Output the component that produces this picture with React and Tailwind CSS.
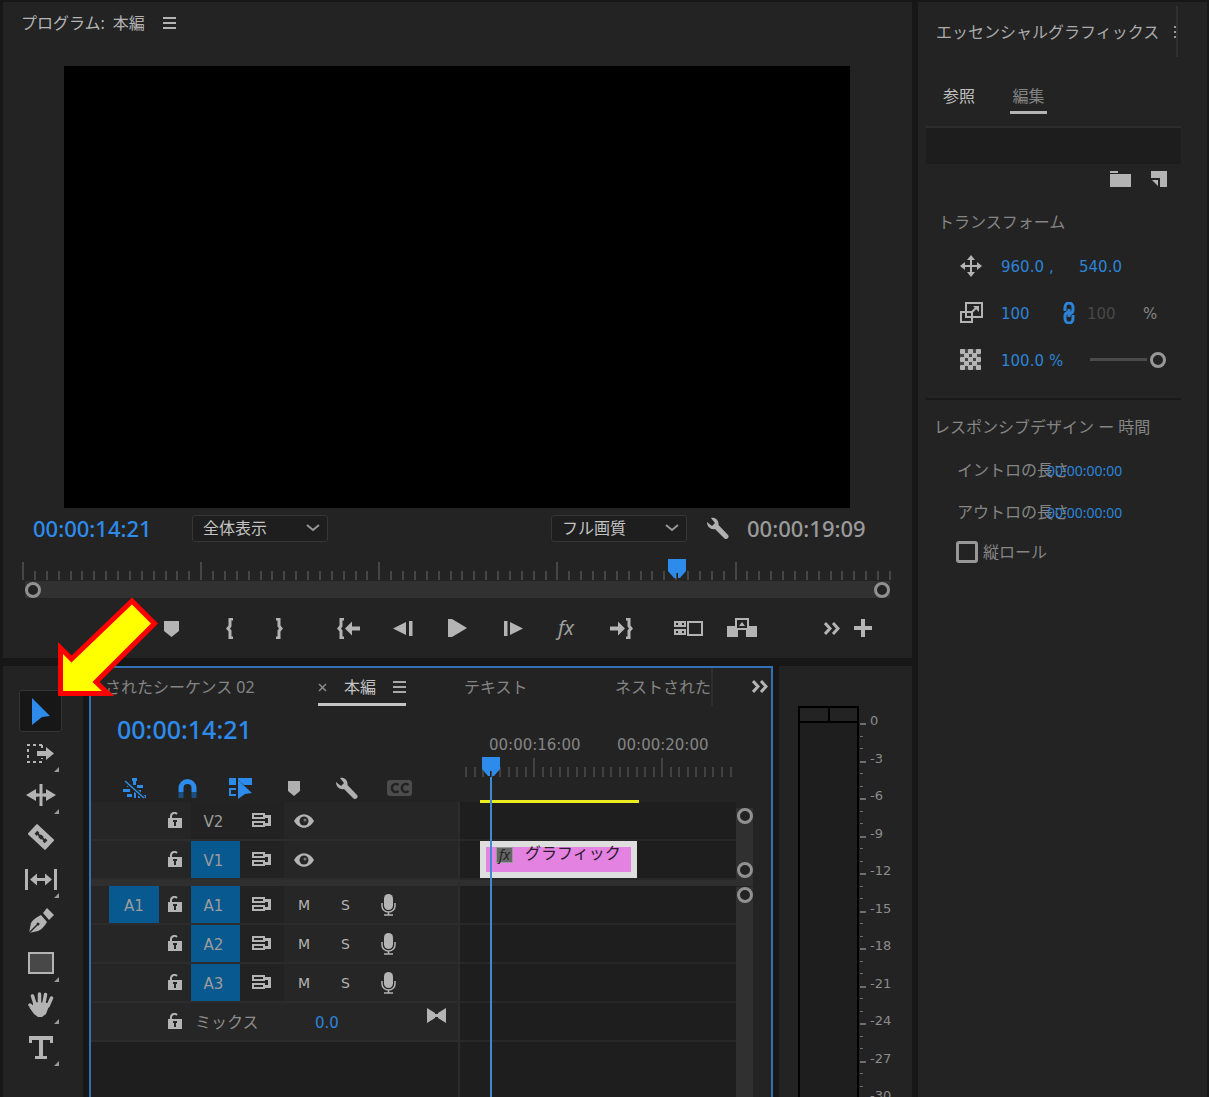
import { useState } from 'react';

const TOOLS = [
  { id: 'select', label: '選択ツール', more: false },
  { id: 'track', label: 'トラックの前方選択ツール', more: true },
  { id: 'ripple', label: 'リップルツール', more: true },
  { id: 'razor', label: 'レーザーツール', more: false },
  { id: 'slip', label: 'スリップツール', more: true },
  { id: 'pen', label: 'ペンツール', more: false },
  { id: 'rect', label: '長方形ツール', more: true },
  { id: 'hand', label: '手のひらツール', more: true },
  { id: 'type', label: '横書き文字ツール', more: true },
];

const TRANSPORT = [
  { id: 'marker', label: 'マーカーを追加', box: 'w-14' },
  { id: 'in', label: 'インをマーク', box: 'w-[60px]' },
  { id: 'out', label: 'アウトをマーク', box: 'w-10' },
  { id: 'goIn', label: 'インポイントへ移動', box: 'ml-[23px] w-[54px]' },
  { id: 'back', label: '1フレーム前へ', box: 'w-[54px]' },
  { id: 'play', label: '再生', box: 'w-[54px]' },
  { id: 'step', label: '1フレーム次へ', box: 'w-[58px]' },
  { id: 'fx', label: 'エフェクト', box: 'w-12' },
  { id: 'goOut', label: 'アウトポイントへ移動', box: 'w-[62px]' },
  { id: 'compare', label: '比較表示', box: 'ml-[9px] w-[54px]' },
  { id: 'export', label: '挿入', box: 'w-[54px]' },
  { id: 'chevrons', label: 'その他', box: 'ml-auto w-8' },
  { id: 'plus', label: 'ボタンエディター', box: 'w-[30px]' },
];

const SETTINGS = [
  { id: 'nest', label: 'ネスト', color: 'text-[#2d8ceb]' },
  { id: 'magnet', label: 'スナップ', color: 'text-[#2d8ceb]' },
  { id: 'linked', label: 'リンクされた選択', color: 'text-[#2d8ceb]' },
  { id: 'smallMarker', label: 'マーカー', color: 'text-[#b0b0b0]' },
  { id: 'wrench', label: 'タイムライン表示設定', color: 'text-[#b0b0b0]' },
  { id: 'cc', label: 'キャプション', color: 'text-[#4c4c4c]' },
];

const DARK = '#232323';
const WRENCH = 'M1 5 L6 9 L9 6 L5 1 C9 0 13 3 12.500 8 L22 18 A2.500 2.500 0 0 1 18.500 21.500 L9 12 C5 13 1 10 1 5 Z';

// [width, height, drawing]
const ICONS = {
  menu: [13, 12, <path d="M0 1h13M0 6h13M0 11h13" stroke="currentColor" strokeWidth="2" />],
  chevron: [14, 8, <path d="M1 1l6 5 6-5" fill="none" stroke="currentColor" strokeWidth="2" />],
  wrench: [23, 23, <path d={WRENCH} fill="currentColor" />],
  marker: [15, 17, <path d="M0 1h15v10l-7.500 6L0 11z" fill="currentColor" />],
  smallMarker: [12, 15, <path d="M0 0h12v10l-6 5-6-5z" fill="currentColor" />],
  in: [7, 21, <path d="M7 0H2.500v7.500L0 10.500l2.500 3V21H7v-2.500H5.500v-6l-1.500-2 1.500-2v-6H7z" fill="currentColor" />],
  out: [7, 21, <path d="M0 0h4.500v7.500L7 10.500l-2.500 3V21H0v-2.500h1.500v-6l1.500-2-1.500-2v-6H0z" fill="currentColor" />],
  goIn: [24, 21, (
    <>
      <path d="M7 0H2.500v7.500L0 10.500l2.500 3V21H7v-2.500H5.500v-6l-1.500-2 1.500-2v-6H7z" fill="currentColor" />
      <path d="M8 10.500l7-7v5h8v4h-8v5z" fill="currentColor" />
    </>
  )],
  goOut: [24, 21, (
    <>
      <path d="M17 0h4.500v7.500l2.500 3-2.500 3V21H17v-2.500h1.500v-6l1.500-2-1.500-2v-6H17z" fill="currentColor" />
      <path d="M16 10.500l-7-7v5H1v4h8v5z" fill="currentColor" />
    </>
  )],
  back: [20, 15, <path d="M0 7.500L13 1v13zM16 0h3.500v15H16z" fill="currentColor" />],
  step: [20, 15, <path d="M20 7.500L7 1v13zM1 0h3.500v15H1z" fill="currentColor" />],
  play: [19, 18, <path d="M0 0h4l15 9L4 18H0z" fill="currentColor" />],
  compare: [29, 15, (
    <g fill="none" stroke="currentColor" strokeWidth="2">
      <path d="M1 1h4v4H1zM7 1h4v4H7zM1 9h4v4H1zM7 9h4v4H7z" />
      <path d="M14 1h14v13H14z" />
    </g>
  )],
  export: [30, 20, (
    <>
      <path d="M0 8h11v11H0zM19 8h11v11H19z" fill="currentColor" />
      <path d="M9 1h12v10H9z" fill={DARK} stroke="currentColor" strokeWidth="2" />
      <path d="M12 8l3-4 3 4z" fill="currentColor" />
    </>
  )],
  chevrons: [16, 13, <path d="M1 1l5 5.500L1 12M9 1l5 5.500L9 12" fill="none" stroke="currentColor" strokeWidth="3" />],
  plus: [18, 18, <path d="M9 0v18M0 9h18" stroke="currentColor" strokeWidth="4" />],
  select: [20, 27, <path d="M1 0l18 18-8 1-10 8z" fill="currentColor" />],
  track: [28, 19, (
    <>
      <path d="M15 1H1v17h14V14M15 1v3" fill="none" stroke="currentColor" strokeWidth="2" strokeDasharray="3 3" />
      <path d="M9 6h13v7H9z" fill={DARK} />
      <path d="M10 7h9V3l8 6.500-8 6.500v-4h-9z" fill="currentColor" />
    </>
  )],
  ripple: [30, 22, (
    <>
      <path d="M0 11l10-6v4.500h10V5l10 6-10 6v-4.500H10V17z" fill="currentColor" />
      <path d="M12 0h6v22h-6z" fill={DARK} />
      <path d="M13.500 0h3v22h-3zM10 9.500h10v3H10z" fill="currentColor" />
    </>
  )],
  razor: [26, 26, (
    <g transform="rotate(43 13 13)">
      <rect x="1" y="6" width="24" height="14" rx="1" fill="currentColor" />
      <path d="M6 11h3v1h2v-1h4v1h2v-1h3v4h-3v-1h-2v1h-4v-1H9v1H6z" fill="#2a2a2a" />
    </g>
  )],
  slip: [32, 21, (
    <>
      <path d="M1.500 0v21M30.500 0v21" stroke="currentColor" strokeWidth="3" />
      <path d="M5 10.500l7-6v4.500h8V4.500l7 6-7 6V12h-8v4.500z" fill="currentColor" />
    </>
  )],
  pen: [26, 26, (
    <>
      <path d="M1 25l2-10q2-4 10-8l6 7q-4 7-9 9z" fill="currentColor" />
      <path d="M1 25l8-8" stroke={DARK} strokeWidth="1.500" />
      <circle cx="10" cy="16" r="1.500" fill={DARK} />
      <path d="M15 5l4-5 7 7-5 5z" fill="currentColor" />
    </>
  )],
  rect: [26, 22, <rect x="1" y="1" width="24" height="20" fill="#484848" stroke="currentColor" strokeWidth="2" />],
  hand: [26, 26, (
    <>
      <path d="M7 12L4.500 4M11.500 11V2M16 11l1.500-8.500M20 14l3.500-8M8 18l-6-5" stroke="currentColor" strokeWidth="3.500" strokeLinecap="round" />
      <path d="M5 10l15 1 1 3-3 8-4 3h-4l-4-3-5-7 4 1z" fill="currentColor" />
    </>
  )],
  type: [24, 23, <path d="M0 0h24v7h-3V4h-7v16h4v3H6v-3h4V4H3v3H0z" fill="currentColor" />],
  lock: [14, 17, (
    <>
      <path d="M3 8V5a3.500 3.500 0 0 1 6-3" fill="none" stroke="currentColor" strokeWidth="2" />
      <path d="M0 6h14v10H0z" fill="currentColor" />
      <path d="M5 8h4v2H8v4H6v-4H5z" fill="#262626" />
    </>
  )],
  sync: [20, 15, (
    <>
      <path d="M1 1h11v4H1zM1 9h11v4H1z" fill="none" stroke="currentColor" strokeWidth="2" />
      <path d="M12 2h7v11h-7v-3h3V5h-3z" fill="currentColor" />
      <path d="M13 5h3v5h-3z" fill="#222222" />
    </>
  )],
  eye: [20, 14, (
    <>
      <path d="M0 7C5-2 15-2 20 7 15 16 5 16 0 7z" fill="currentColor" />
      <circle cx="10" cy="7" r="4.500" fill="#262626" />
      <circle cx="11" cy="6" r="1.500" fill="#777" />
    </>
  )],
  mic: [15, 22, (
    <>
      <rect x="3" y="0" width="9" height="16" rx="4.500" fill="currentColor" />
      <path d="M1 9v3a6.500 6 0 0 0 13 0V9M7.500 18v3M3 21h9" fill="none" stroke="currentColor" strokeWidth="1.500" />
    </>
  )],
  keyframe: [19, 15, <path d="M0 0l8 5v5l-8 5zM19 0l-8 5v5l8 5zM8 6h3v3H8z" fill="currentColor" />],
  nest: [23, 21, (
    <>
      <path d="M9 0h5v3H13v4h-3V3H9zM4 6h5v3H4zM14 7h6v3h-6zM0 11h7v3H0zM15 12h3v3h-3zM4 16h5v3H4zM11 12h2v8h-2zM19 17h4v3h-4zM15 17h2v3h-2z" fill="currentColor" />
      <path d="M2 3l19 17" stroke={DARK} strokeWidth="4" />
      <path d="M2 3l19 17" stroke="currentColor" strokeWidth="1.500" />
    </>
  )],
  magnet: [19, 19, (
    <>
      <path d="M3 13V9a6.500 6.500 0 0 1 13 0v4" fill="none" stroke="currentColor" strokeWidth="5" />
      <path d="M3 13v6M16 13v6" stroke="#1d4e7e" strokeWidth="5" />
    </>
  )],
  linked: [23, 21, (
    <>
      <path d="M0 0h7v7H0zM9 0h14v7h-8L9 2z" fill="currentColor" />
      <path d="M7 11H1v6h6" fill="none" stroke="currentColor" strokeWidth="2" />
      <path d="M9 2l14 13-7 1-7 5z" fill="currentColor" />
    </>
  )],
  cc: [25, 16, (
    <>
      <rect width="25" height="16" rx="3" fill="currentColor" />
      <path d="M11.500 5a4 4 0 1 0 0 6M21.500 5a4 4 0 1 0 0 6" fill="none" stroke={DARK} strokeWidth="2.500" />
    </>
  )],
  folder: [21, 16, <path d="M0 0h8v2H0zM0 3h21v13H0z" fill="currentColor" />],
  layer: [16, 16, <path d="M0 0h16v16H9V7H0zM1 9h6v6z" fill="currentColor" />],
  move: [22, 22, (
    <>
      <path d="M11 3v16M3 11h16" stroke="currentColor" strokeWidth="2" />
      <path d="M11 0l4 5H7zM11 22l4-5H7zM0 11l5-4v8zM22 11l-5-4v8z" fill="currentColor" />
    </>
  )],
  scale: [23, 21, (
    <>
      <path d="M6 1h16v14H6z" fill="none" stroke="currentColor" strokeWidth="2" />
      <path d="M1 10h11v10H1z" fill="none" stroke="currentColor" strokeWidth="2" />
      <path d="M12 10l5-5" stroke="currentColor" strokeWidth="2" />
      <path d="M13 4h6v6z" fill="currentColor" />
    </>
  )],
  link: [12, 22, (
    <g fill="none" stroke="currentColor" strokeWidth="3">
      <path d="M2 9V5.500a3.500 4 0 0 1 8 0V8q0 3-4 4v3" />
      <path d="M10 13v3.500a3.500 4 0 0 1-8 0V14q0-3 4-4V7" />
    </g>
  )],
};

function Icon({ name, className = '' }) {
  const [w, h, art] = ICONS[name];
  return (
    <svg width={w} height={h} viewBox={`0 0 ${w} ${h}`} className={`shrink-0 ${className}`} aria-hidden="true">
      {art}
    </svg>
  );
}

function OpacityIcon() {
  const dots = [];
  for (let r = 0; r < 5; r++) {
    for (let c = 0; c < 5; c++) {
      if ((r + c) % 2 === 0) dots.push(<rect key={`${r}-${c}`} x={c * 4} y={r * 4} width="5" height="5" rx="1" />);
    }
  }
  return (
    <svg width="21" height="21" viewBox="0 0 21 21" className="text-[#b4b4b4]" aria-hidden="true">
      <rect width="21" height="21" fill="#444" />
      <g fill="currentColor">{dots}</g>
    </svg>
  );
}

function Fx({ className = '' }) {
  return <span className={`font-['Noto_Sans',sans-serif] italic ${className}`}>fx</span>;
}

function Knob({ label, className = '' }) {
  return <button aria-label={label} className={`block size-4 shrink-0 rounded-full border-3 border-[#919191] bg-[#232323] ${className}`} />;
}

function PlayheadCap() {
  return (
    <svg width="18" height="20" viewBox="0 0 18 20" aria-hidden="true">
      <path d="M0 0h18v12l-6 7h-2v-5H8v5H6l-6-7z" fill="#2d8ceb" />
    </svg>
  );
}

function ValueInput({ label, value, className = '' }) {
  return (
    <input
      aria-label={label}
      defaultValue={value}
      className={`bg-transparent pt-[3px] font-['DejaVu_Sans',sans-serif] text-[15px] text-[#2c83d8] outline-none ${className}`}
    />
  );
}

function Dropdown({ label, options }) {
  return (
    <div className="relative w-[136px]">
      <select aria-label={label} className="h-[27px] w-full appearance-none rounded-[3px] border border-[#363636] bg-[#1e1e1e] pl-[10px] text-base leading-5 text-[#c4c4c4]">
        {options.map(o => <option key={o}>{o}</option>)}
      </select>
      <Icon name="chevron" className="pointer-events-none absolute top-[9px] right-2 text-[#989898]" />
    </div>
  );
}

function ProgramMonitor() {
  const ticks = Array.from({ length: 74 }, (_, i) => i);
  return (
    <section className="mb-2 bg-[#232323]">
      <header className="mb-[22px] flex h-[42px] items-center gap-[18px] pl-[18px] text-[#b4b4b4]">
        <h2 className="flex gap-2 text-base"><span>プログラム:</span><span>本編</span></h2>
        <button aria-label="パネルメニュー"><Icon name="menu" /></button>
      </header>
      <div className="mr-[62px] ml-[61px] aspect-video bg-black" />
      <div className="flex h-10 items-center pr-[46px] pl-[30px]">
        <input aria-label="現在の時間" defaultValue="00:00:14:21" className="w-[159px] bg-transparent text-[22px] font-medium text-[#2d8ceb]" />
        <Dropdown label="ズームレベル" options={['全体表示', '100%']} />
        <div className="flex-1" />
        <Dropdown label="再生時の解像度" options={['フル画質', '1/2']} />
        <button aria-label="設定" className="flex w-[60px] justify-center text-[#b0b0b0]"><Icon name="wrench" /></button>
        <span className="w-[119px] text-[22px] font-medium text-[#9a9a9a]">00:00:19:09</span>
      </div>
      <div className="relative mt-[14px] mr-[22px] ml-5 h-[18px]">
        <svg width="100%" height="18" className="block overflow-visible" shapeRendering="crispEdges">
          {ticks.map(i => {
            const x = `${(i / 73) * 100}%`;
            return <line key={i} x1={x} x2={x} y1={i % 15 === 0 ? 0 : 9} y2="18" stroke="#464646" strokeWidth="2" />;
          })}
        </svg>
        <div className="absolute -top-[3px] left-3/4 -ml-[5px]"><PlayheadCap /></div>
      </div>
      <div className="mx-[22px] mt-px flex h-[17px] items-center justify-between bg-[#313131]">
        <Knob label="ズーム開始" />
        <Knob label="ズーム終了" />
      </div>
      <div className="flex h-[60px] items-center pr-[34px] pl-[140px] text-[#b4b4b4]">
        {TRANSPORT.map(b => (
          <button key={b.id} aria-label={b.label} className={`flex h-8 items-center justify-center ${b.box}`}>
            {b.id === 'fx' ? <Fx className="text-xl text-[#a0a0a0]" /> : <Icon name={b.id} />}
          </button>
        ))}
      </div>
    </section>
  );
}

function Toolbar() {
  const [active, setActive] = useState('select');
  return (
    <nav className="flex w-20 shrink-0 flex-col bg-[#232323] pt-6 pl-4">
      {TOOLS.map(t => (
        <button
          key={t.id}
          aria-label={t.label}
          onClick={() => setActive(t.id)}
          className={`relative flex h-[42px] w-[43px] items-center justify-center rounded-[3px] border ${active === t.id ? 'border-[#343434] bg-[#171717] text-[#2d8ceb]' : 'border-transparent text-[#b4b4b4]'}`}
        >
          <Icon name={t.id} />
          {t.more && (
            <svg width="5" height="5" className="absolute right-[2px] bottom-px" aria-hidden="true">
              <path d="M5 0v5H0z" fill="#9a9a9a" />
            </svg>
          )}
        </button>
      ))}
    </nav>
  );
}

function TrackHeader({ name, source, target, audio }) {
  return (
    <div className="grid h-[39px] grid-cols-[50px_32px_49px_44px_40px_43px_42px] items-center justify-items-center border-b-2 border-[#2c2c2c] bg-[#262626] pl-[18px] font-['DejaVu_Sans',sans-serif] text-[15px] text-[#9c9c9c]">
      {source ? <button className="h-full w-full bg-[#07598f] pt-[3px]">{source}</button> : <span />}
      <button aria-label={`${name} をロック`} className="text-[#b4b4b4]"><Icon name="lock" /></button>
      <button className={`h-full w-full pt-[3px] pr-1 ${target ? 'bg-[#07598f]' : 'bg-[#222222]'}`}>{name}</button>
      <button aria-label={`${name} 同期ロック`} className="flex h-full w-full items-center justify-center bg-[#222222] text-[#b4b4b4]"><Icon name="sync" /></button>
      {audio ? (
        <>
          <button className="pt-px text-sm text-[#b4b4b4]">M</button>
          <button className="pt-px text-sm text-[#b4b4b4]">S</button>
          <button aria-label={`${name} ボイスオーバー`} className="text-[#b4b4b4]"><Icon name="mic" /></button>
        </>
      ) : (
        <button aria-label={`${name} 表示`} className="text-[#b4b4b4]"><Icon name="eye" /></button>
      )}
    </div>
  );
}

function Lane({ children }) {
  return <div className="h-[39px] border-b-2 border-[#272727]">{children}</div>;
}

function Timeline() {
  const ticks = Array.from({ length: 32 }, (_, i) => i);
  return (
    <section className="flex min-w-0 flex-1 flex-col border-2 border-b-0 border-[#3272b4] bg-[#232323]">
      <div className="flex h-11 items-start text-base text-[#858585]">
        <button className="h-[38px] w-[227px] pl-[14px] text-left whitespace-nowrap">されたシーケンス 02</button>
        <div className="flex h-[38px] w-[88px] items-center justify-between border-b-3 border-[#c4c4c4] pt-[3px]">
          <button aria-label="閉じる" className="w-[9px]">
            <svg width="9" height="9" aria-hidden="true"><path d="M1 1l7 7M8 1L1 8" stroke="#8a8a8a" strokeWidth="1.500" /></svg>
          </button>
          <button className="text-[#c4c4c4]">本編</button>
          <button aria-label="パネルメニュー" className="text-[#a8a8a8]"><Icon name="menu" /></button>
        </div>
        <button className="ml-[58px] h-[38px] w-[151px] text-left">テキスト</button>
        <button className="h-[38px] w-[98px] overflow-hidden border-r-2 border-[#2d2d2d] text-left whitespace-nowrap">ネストされた</button>
        <button aria-label="その他のタブ" className="mt-3 mr-[3px] ml-auto text-[#b4b4b4]"><Icon name="chevrons" /></button>
      </div>
      <div className="flex min-h-0 flex-1">
        <div className="flex w-[369px] shrink-0 flex-col">
          <div className="flex h-[90px] shrink-0 flex-col">
            <input aria-label="再生ヘッドの位置" defaultValue="00:00:14:21" className="ml-[26px] h-9 w-[160px] bg-transparent text-[25px] font-medium text-[#2d8ceb]" />
            <div className="mt-auto flex h-7 items-center pl-[17px]">
              {SETTINGS.map(s => (
                <button key={s.id} aria-label={s.label} className={`flex w-[53px] justify-center ${s.color}`}><Icon name={s.id} /></button>
              ))}
            </div>
          </div>
          <div className="flex flex-1 flex-col border-r-2 border-[#2c2c2c]">
            <TrackHeader name="V2" />
            <TrackHeader name="V1" target />
            <div className="h-[6px] shrink-0 bg-[#2f2f2f]" />
            <TrackHeader name="A1" source="A1" target audio />
            <TrackHeader name="A2" target audio />
            <TrackHeader name="A3" target audio />
            <div className="flex h-[39px] shrink-0 items-center border-b-2 border-[#2c2c2c] bg-[#262626] pl-[68px]">
              <button aria-label="ミックスをロック" className="flex w-8 justify-center text-[#b4b4b4]"><Icon name="lock" /></button>
              <span className="w-[124px] pl-1 text-base text-[#8c8c8c]">ミックス</span>
              <ValueInput label="ミックス" value="0.0" className="w-12" />
              <Icon name="keyframe" className="mr-3 mb-3 ml-auto text-[#b4b4b4]" />
            </div>
            <div className="flex-1 bg-[#1e1e1e]" />
          </div>
        </div>
        <div className="relative flex min-w-0 flex-1 flex-col overflow-hidden bg-[#1e1e1e]">
          <div className="flex h-[90px] shrink-0 flex-col bg-[#232323]">
            <div className="flex h-[46px] items-end pl-[29px] font-['DejaVu_Sans',sans-serif] text-[15px] leading-[25px] text-[#858585]">
              <span className="w-32 shrink-0">00:00:16:00</span>
              <span className="shrink-0">00:00:20:00</span>
            </div>
            <svg width="100%" height="19" className="block" shapeRendering="crispEdges">
              {ticks.map(i => {
                const x = Math.round(5 + (i * 128) / 15);
                return <rect key={i} x={x} y={i % 15 === 8 ? 0 : 9} width="2" height={i % 15 === 8 ? 19 : 10} fill="#424242" />;
              })}
            </svg>
          </div>
          <Lane />
          <Lane>
            <div className="ml-5 flex h-[37px] w-[157px] items-start gap-3 border-6 border-[#dedede] bg-[#e482e2] pl-[10px]">
              <span className="flex h-[16px] w-[17px] items-center justify-center border border-[#999] bg-[#666] text-sm leading-none text-[#222]"><Fx /></span>
              <span className="-mt-1 text-base leading-5 whitespace-nowrap text-[#2c1a2c]">グラフィック</span>
            </div>
          </Lane>
          <div className="h-[6px] shrink-0 bg-[#2f2f2f]" />
          <Lane />
          <Lane />
          <Lane />
          <Lane />
          <div className="absolute top-[88px] left-5 h-[3px] w-[159px] bg-[#ecec20]" />
          <div className="absolute top-[45px] left-[22px] h-full">
            <PlayheadCap />
            <div className="mx-auto h-full w-[2px] bg-[#3f8ad6]" />
          </div>
        </div>
        <div className="flex w-[35px] shrink-0 flex-col pt-[96px]">
          <div className="flex h-[70px] w-[17px] flex-col items-center justify-between bg-[#303030]">
            <Knob label="ビデオ上" />
            <Knob label="ビデオ下" />
          </div>
          <div className="h-2 w-[17px] bg-[#2f2f2f]" />
          <div className="mt-px w-[17px] flex-1 bg-[#303030]">
            <Knob label="オーディオ" className="mx-auto" />
          </div>
        </div>
      </div>
    </section>
  );
}

function AudioMeters() {
  const marks = Array.from({ length: 31 }, (_, i) => i);
  return (
    <section className="flex w-[133px] shrink-0 overflow-hidden bg-[#232323] pt-10 pl-[19px]">
      <div className="flex w-[61px] shrink-0 flex-col border-2 border-b-0 border-black bg-[#1e1e1e]">
        <div className="flex h-[15px] shrink-0 border-b-2 border-black bg-[#232323]">
          <div className="w-[30px] border-r-2 border-black" />
        </div>
      </div>
      <svg width="52" height="400" className="shrink-0 font-['DejaVu_Sans',sans-serif] text-[13px]" fill="#8c8c8c" role="img" aria-label="オーディオメーター">
        {marks.map(i => {
          const y = Math.round(17 + i * 12.5);
          const big = i % 3 === 0;
          return (
            <g key={i}>
              <rect x="1" y={y} width={big ? 6 : 3} height={big ? 2 : 1} fill="#6e6e6e" />
              {big && <text x="11" y={y + 2}>{i === 0 ? '0' : `-${i}`}</text>}
            </g>
          );
        })}
      </svg>
    </section>
  );
}

function DurationRow({ id, label }) {
  return (
    <div className="flex h-[42px] items-center pl-[39px]">
      <label htmlFor={id} className="whitespace-nowrap">{label}</label>
      <input id={id} defaultValue="00:00:00:00" className="-ml-[22px] w-20 bg-transparent pt-[2px] text-sm text-[#2c83d8]" />
    </div>
  );
}

function EssentialGraphics() {
  return (
    <aside className="mr-[2px] w-[289px] shrink-0 bg-[#232323] text-base text-[#858585]">
      <header className="mt-1 mr-[29px] flex h-[51px] items-center justify-between border-r-2 border-[#303030] pl-[18px]">
        <h2 className="whitespace-nowrap text-[#ababab]">エッセンシャルグラフィックス</h2>
        <span className="flex flex-col gap-[3px]">
          <i className="h-[2px] w-[2px] bg-[#999]" />
          <i className="h-[2px] w-[2px] bg-[#999]" />
          <i className="h-[2px] w-[2px] bg-[#999]" />
        </span>
      </header>
      <div className="mt-5 mb-3 flex gap-[35px] pl-[25px]">
        <button className="h-[37px] text-[#c0c0c0]">参照</button>
        <button className="h-[37px] w-[37px] border-b-3 border-[#b4b4b4] pt-[3px] text-[#858585]">編集</button>
      </div>
      <div className="mr-[26px] ml-2 h-[38px] border-t-2 border-[#2d2d2d] bg-[#1d1d1d]" />
      <div className="flex h-[30px] items-center justify-end gap-5 pr-10 text-[#b4b4b4]">
        <button aria-label="グループを作成"><Icon name="folder" /></button>
        <button aria-label="新規レイヤー"><Icon name="layer" /></button>
      </div>
      <h3 className="mt-4 pl-5 leading-6">トランスフォーム</h3>
      <div className="mt-2 pl-[42px] font-['DejaVu_Sans',sans-serif] text-[15px]">
        <div className="flex h-[47px] items-center">
          <span className="w-[41px] text-[#b4b4b4]"><Icon name="move" /></span>
          <ValueInput label="位置 X" value="960.0" className="w-12" />
          <span className="w-[30px] pt-[3px] text-[#2c83d8]">,</span>
          <ValueInput label="位置 Y" value="540.0" className="w-14" />
        </div>
        <div className="flex h-[47px] items-center">
          <span className="w-[41px] text-[#b4b4b4]"><Icon name="scale" /></span>
          <ValueInput label="高さ" value="100" className="w-[62px]" />
          <button aria-label="縦横比を固定" className="w-6 text-[#2c83d8]"><Icon name="link" /></button>
          <input aria-label="幅" disabled defaultValue="100" className="w-14 bg-transparent pt-[3px] text-[#484848]" />
          <span className="pt-[3px]">%</span>
        </div>
        <div className="flex h-[47px] items-center">
          <span className="w-[41px]"><OpacityIcon /></span>
          <ValueInput label="不透明度" value="100.0" className="w-12" />
          <span className="w-[41px] pt-[3px] text-[#2c83d8]">%</span>
          <input
            type="range"
            aria-label="不透明度スライダー"
            defaultValue="100"
            className="h-4 w-[76px] appearance-none bg-transparent [&::-webkit-slider-runnable-track]:h-4 [&::-webkit-slider-runnable-track]:bg-[linear-gradient(#4a4a4a,#4a4a4a)] [&::-webkit-slider-runnable-track]:bg-[length:57px_3px] [&::-webkit-slider-runnable-track]:bg-left [&::-webkit-slider-runnable-track]:bg-no-repeat [&::-webkit-slider-thumb]:size-4 [&::-webkit-slider-thumb]:appearance-none [&::-webkit-slider-thumb]:rounded-full [&::-webkit-slider-thumb]:border-3 [&::-webkit-slider-thumb]:border-[#989898] [&::-webkit-slider-thumb]:bg-[#232323]"
          />
        </div>
      </div>
      <hr className="mt-[15px] mr-[26px] ml-2 border-t-2 border-[#191919]" />
      <h3 className="mt-[15px] pl-4 leading-6">レスポンシブデザイン ー 時間</h3>
      <div className="mt-[10px]">
        <DurationRow id="intro" label="イントロの長さ" />
        <DurationRow id="outro" label="アウトロの長さ" />
        <label className="flex h-[38px] items-center gap-[5px] pl-[38px]">
          <input type="checkbox" className="size-[22px] appearance-none rounded-[3px] border-3 border-[#989898]" />
          縦ロール
        </label>
      </div>
    </aside>
  );
}

export default function App() {
  return (
    <div className="flex h-screen gap-[6px] overflow-hidden bg-[#171717] pt-[2px] font-['Noto_Sans','Noto_Sans_CJK_JP',sans-serif]">
      <main className="relative flex min-w-0 flex-1 flex-col pl-[3px]">
        <ProgramMonitor />
        <div className="flex min-h-0 flex-1 gap-[6px]">
          <Toolbar />
          <Timeline />
          <AudioMeters />
        </div>
        {/* callout arrow pointing at the selection tool */}
        <svg width="106" height="104" viewBox="0 0 106 104" className="pointer-events-none absolute top-[593px] left-[56px]" aria-hidden="true">
          <path d="M4.500 53L15.500 64 76 6l22.500 22.500L40 87l12 11.500H4.500z" fill="#ffff00" stroke="#ff0000" strokeWidth="5" />
        </svg>
      </main>
      <EssentialGraphics />
    </div>
  );
}
